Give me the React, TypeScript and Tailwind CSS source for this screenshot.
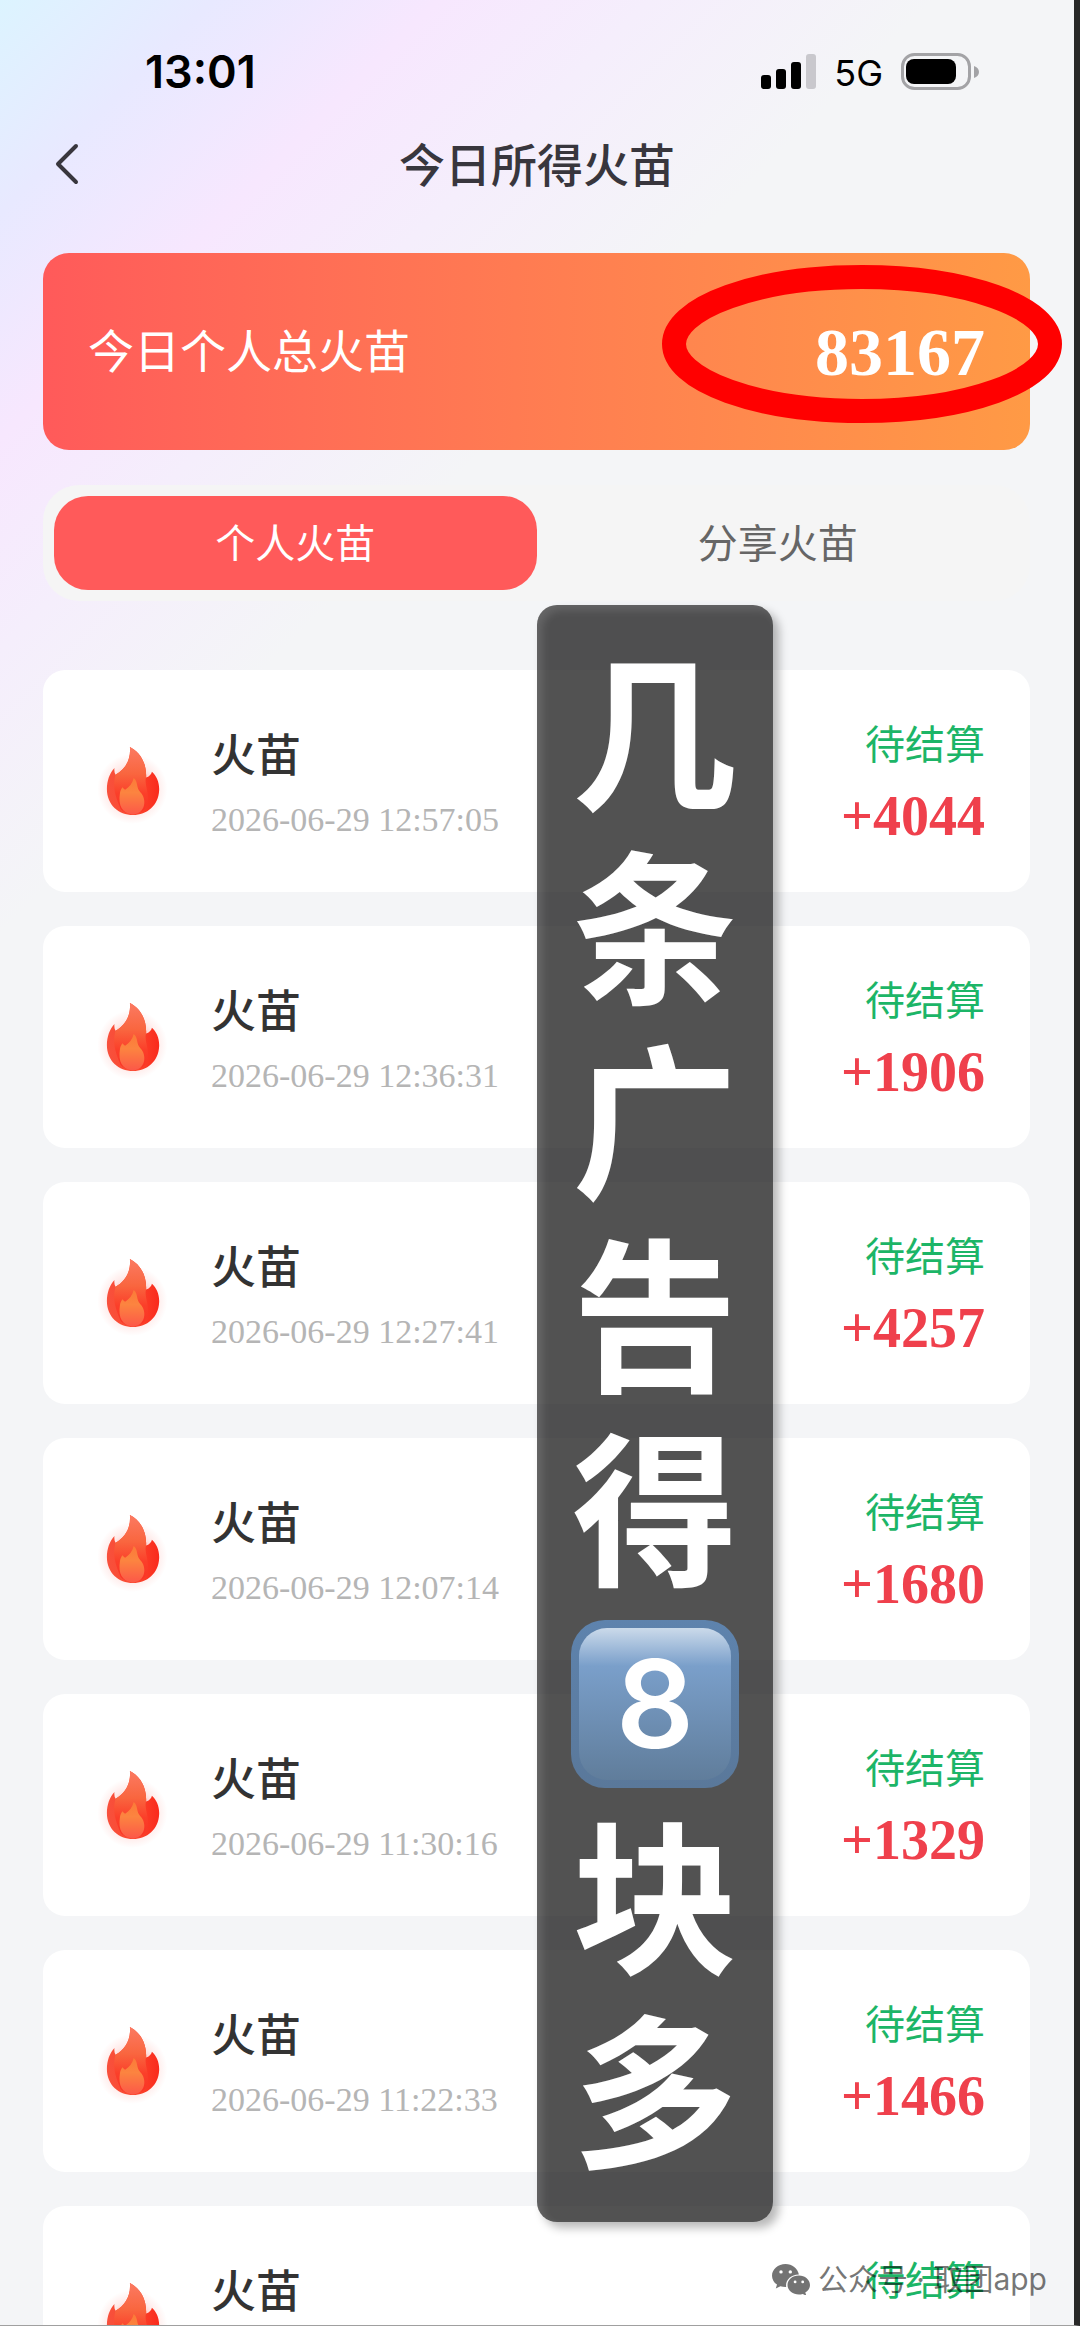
import { useState } from 'react';

type FlameRecord = {
  id: number;
  time?: string;
  amount?: string;
};

const records: FlameRecord[] = [
  { id: 1, time: '2026-06-29 12:57:05', amount: '+4044' },
  { id: 2, time: '2026-06-29 12:36:31', amount: '+1906' },
  { id: 3, time: '2026-06-29 12:27:41', amount: '+4257' },
  { id: 4, time: '2026-06-29 12:07:14', amount: '+1680' },
  { id: 5, time: '2026-06-29 11:30:16', amount: '+1329' },
  { id: 6, time: '2026-06-29 11:22:33', amount: '+1466' },
  { id: 7 },
];

const tabs = [
  { key: 'personal', label: '个人火苗' },
  { key: 'share', label: '分享火苗' },
];

const FlameDefs = () => (
  <svg className="absolute size-0" aria-hidden="true">
    <defs>
      <radialGradient id="flame-glow">
        <stop offset="0.4" stopColor="#ff3b30" stopOpacity="0.38" />
        <stop offset="0.7" stopColor="#ff5a4e" stopOpacity="0.12" />
        <stop offset="1" stopColor="#ff5a4e" stopOpacity="0" />
      </radialGradient>
      <linearGradient id="flame-back" x1="0" y1="0" x2="1" y2="0">
        <stop offset="0" stopColor="#f8503c" />
        <stop offset="0.5" stopColor="#fb4a30" />
        <stop offset="1" stopColor="#fa2a1c" />
      </linearGradient>
      <linearGradient id="flame-body" x1="0" y1="0" x2="0" y2="1">
        <stop offset="0" stopColor="#fb7a62" />
        <stop offset="0.4" stopColor="#f9663f" />
        <stop offset="0.7" stopColor="#fb3f2a" />
        <stop offset="1" stopColor="#fa3224" />
      </linearGradient>
      <linearGradient id="flame-core" x1="0" y1="0" x2="0" y2="1">
        <stop offset="0" stopColor="#fb7a38" />
        <stop offset="0.4" stopColor="#fc8440" />
        <stop offset="1" stopColor="#fc5848" />
      </linearGradient>
    </defs>
  </svg>
);

const FlameIcon = () => (
  <svg viewBox="27 50 256 256" className="size-[88px] shrink-0" aria-hidden="true">
    <circle cx="156" cy="204" r="102" fill="url(#flame-glow)" />
    <path
      d="M149 82C178 97 198 128 196 171C205 168 211 162 213 154C226 166 235 184 234 208C232 252 199 280 158 280C116 280 82 250 82 205C82 180 90 158 104 143C103 151 104 157 107 163C135 147 152 120 149 82Z"
      fill="url(#flame-back)"
    />
    <path
      d="M149 82C178 97 198 128 196 171C188 192 214 224 192 262C180 278 138 282 122 262C112 236 96 204 107 163C135 147 152 120 149 82Z"
      fill="url(#flame-body)"
    />
    <path
      d="M160 172C174 184 166 200 180 214C198 232 196 276 157 278C126 276 114 252 120 216C121 208 124 203 128 199C130 203 132 205 135 206C147 198 156 188 160 172Z"
      fill="url(#flame-core)"
    />
  </svg>
);

const StatusBar = () => (
  <div className="flex h-24 items-center justify-between pt-12 pl-[145px] pr-[95px] text-black">
    <span className="font-['Inter',sans-serif] text-[45px] leading-12 font-semibold">13:01</span>
    <div className="flex items-center">
      <svg viewBox="0 0 55 36" className="h-9 w-[55px]" aria-hidden="true">
        <rect x="0" y="21" width="10" height="14" rx="3" />
        <rect x="15" y="15" width="10" height="20" rx="3" />
        <rect x="30" y="8" width="10" height="27" rx="3" />
        <rect x="45" y="0" width="10" height="35" rx="3" fill="#c9c8cd" />
      </svg>
      <span className="ml-[18px] pt-0.5 font-['Inter',sans-serif] text-[36px] leading-12">5G</span>
      <svg viewBox="0 0 78 38" className="ml-[18px] h-[38px] w-[78px]" aria-hidden="true">
        <rect x="1.5" y="1.5" width="67" height="34" rx="12" fill="none" stroke="#a3a3a6" strokeWidth="3" />
        <rect x="5" y="6" width="50" height="25" rx="8" />
        <path d="M73 13c3 1 5 3 5 6s-2 5-5 6z" fill="#a3a3a6" />
      </svg>
    </div>
  </div>
);

const RecordCard = ({ time, amount }: FlameRecord) => (
  <li className="flex h-[222px] items-start rounded-[22px] bg-white px-[45px]">
    <div className="pt-[66px]">
      <FlameIcon />
    </div>
    <div className="grow pt-14 pl-[35px]">
      <h2 className="text-[45px] leading-[54px] font-medium text-[#333333]">火苗</h2>
      <p className="mt-5 h-10 font-['Liberation_Serif',serif] text-[34px] leading-10 text-[#b5b5b5]">{time}</p>
    </div>
    <div className="pt-12 text-right">
      <p className="text-[40px] leading-12 text-[#1cb567]">待结算</p>
      <p className="mt-5 font-['Liberation_Serif',serif] text-[56px] leading-[60px] font-bold text-[#ef404c]">
        {amount}
      </p>
    </div>
  </li>
);

const KeycapEight = () => (
  <span className="flex h-[194px] items-center justify-center pt-4">
    <span className="flex size-[168px] items-center justify-center rounded-[34px] bg-linear-to-b from-[#5e83ad] to-[#5a789a] p-2">
      <span className="flex size-full items-center justify-center rounded-[28px] bg-linear-to-b from-[#cbdaea] via-[#7a9fca] via-25% to-[#607d9b] font-['Inter',sans-serif] text-[122px] leading-none font-semibold">
        8
      </span>
    </span>
  </span>
);

const Caption = () => (
  <div className="absolute top-[605px] left-1/2 flex w-[236px] flex-col rounded-[20px] bg-black/68 pt-6 pb-[41px] text-center text-[165px] leading-[194px] font-bold text-white shadow-[6px_6px_10px_rgba(0,0,0,0.28),inset_5px_5px_8px_rgba(255,255,255,0.13)]">
    <span>几</span>
    <span>条</span>
    <span>广</span>
    <span>告</span>
    <span>得</span>
    <KeycapEight />
    <span>块</span>
    <span>多</span>
  </div>
);

const Watermark = () => (
  <div className="absolute right-[27px] bottom-[26px] flex items-center gap-2 font-['Inter','Noto_Sans_CJK_SC',sans-serif] text-[30px] leading-10 text-black/55">
    <svg viewBox="0 0 38 31" className="h-[31px] w-[38px]" aria-hidden="true">
      <path
        fillRule="evenodd"
        fill="currentColor"
        d="M13.500 0C6 0 0 5.200 0 11.700c0 3.600 1.900 6.800 5 8.900L3.800 24.500l4.600-2.200c1.600.5 3.300.8 5 .8h.8c-1.100-6.500 4.300-12.600 12.500-12.600h.2C25.700 4.500 20.200 0 13.500 0zM9 6.200a1.700 1.700 0 1 1 0 3.400 1.700 1.700 0 0 1 0-3.400zm9.300 0a1.700 1.700 0 1 1 0 3.400 1.700 1.700 0 0 1 0-3.400z"
      />
      <path
        fillRule="evenodd"
        fill="currentColor"
        d="M26.800 11.500c-6.300 0-11.300 4.200-11.300 9.500s5 9.500 11.300 9.500c1.400 0 2.700-.2 3.900-.6l3.600 1.800-1-3.200c2.900-1.700 4.700-4.400 4.700-7.500 0-5.300-5-9.500-11.200-9.500zm-3.700 5a1.400 1.400 0 1 1 0 2.800 1.400 1.400 0 0 1 0-2.800zm7.600 0a1.400 1.400 0 1 1 0 2.800 1.400 1.400 0 0 1 0-2.800z"
      />
    </svg>
    <span>公众号 · 取团app</span>
  </div>
);

export default function App() {
  const [tab, setTab] = useState('personal');

  return (
    <div className="relative h-screen overflow-hidden border-r-[6px] border-b border-r-[#282828] border-b-[#a0a0a0] bg-[linear-gradient(135deg,#dcf4ff_0px,#e8e9ff_150px,#f7e7fe_310px,#f5eefc_460px,#f4f5f7_660px)] font-['Noto_Sans_CJK_SC',sans-serif]">
      <FlameDefs />
      <StatusBar />

      <header className="grid h-[136px] grid-cols-[80px_1fr_80px] items-center pb-1">
        <button type="button" aria-label="返回" className="flex cursor-pointer justify-end pt-1">
          <svg viewBox="0 0 26 42" className="h-[42px] w-[26px]" fill="none" aria-hidden="true">
            <path d="M22 3L4 21L22 39" stroke="#38363d" strokeWidth="4" strokeLinecap="round" strokeLinejoin="round" />
          </svg>
        </button>
        <h1 className="text-center text-[46px] leading-[60px] font-medium text-[#38363d]">今日所得火苗</h1>
      </header>

      <main className="pr-[44px] pl-[43px]">
        <section className="relative mt-[21px] flex h-[197px] items-center justify-between rounded-[26px] bg-linear-to-r from-[#ff5a5a] to-[#ff9a45] px-[45px] text-white">
          <p className="pb-2 text-[46px] leading-[60px]">今日个人总火苗</p>
          <p className="font-['Liberation_Serif',serif] text-[68px] leading-[76px] font-bold">83167</p>
          <svg viewBox="0 0 400 158" className="absolute top-3 -right-8 h-[158px] w-[400px]" fill="none" aria-hidden="true">
            <ellipse cx="200" cy="79" rx="188" ry="67" stroke="#ff0000" strokeWidth="24" />
          </svg>
        </section>

        <div className="mt-[35px] grid grid-cols-2 rounded-[36px] bg-[#f5f5f5] p-[11px]" role="tablist">
          {tabs.map((item) => (
            <button
              key={item.key}
              type="button"
              role="tab"
              aria-selected={tab === item.key}
              onClick={() => setTab(item.key)}
              className={`h-[94px] cursor-pointer rounded-[34px] pb-1 text-[40px] leading-12 ${tab === item.key ? 'bg-[#ff5a5a] text-white' : 'text-[#666666]'}`}>
              {item.label}
            </button>
          ))}
        </div>

        <ul className="mt-[69px] flex flex-col gap-[34px]">
          {records.map((record) => (
            <RecordCard key={record.id} {...record} />
          ))}
        </ul>
      </main>

      <Caption />
      <Watermark />
    </div>
  );
}
